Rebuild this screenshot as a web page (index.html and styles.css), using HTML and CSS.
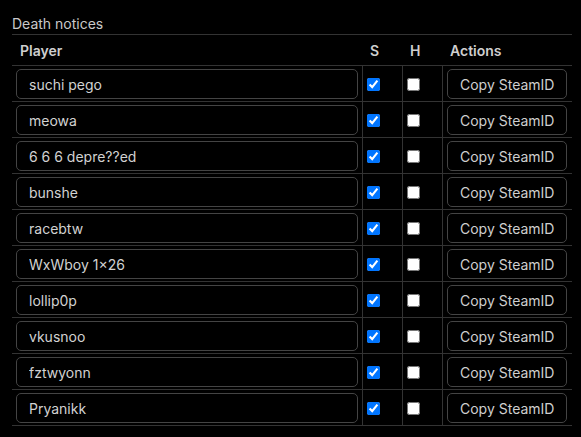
FILE: index.html
```html
<!DOCTYPE html>
<html lang="en">
<head>
<meta charset="utf-8">
<title>Death notices</title>
<link rel="stylesheet" href="styles.css">
</head>
<body>
<section class="panel">
  <div class="title">Death notices</div>
  <div class="table">
    <div class="row head">
      <div class="cell">Player</div>
      <div class="cell">S</div>
      <div class="cell">H</div>
      <div class="cell">Actions</div>
    </div>
    <div class="row">
      <div class="cell"><input class="name" type="text" value="suchi pego"></div>
      <div class="cell"><input type="checkbox" checked></div>
      <div class="cell"><input type="checkbox"></div>
      <div class="cell"><button class="btn">Copy SteamID</button></div>
    </div>
    <div class="row">
      <div class="cell"><input class="name" type="text" value="meowa"></div>
      <div class="cell"><input type="checkbox" checked></div>
      <div class="cell"><input type="checkbox"></div>
      <div class="cell"><button class="btn">Copy SteamID</button></div>
    </div>
    <div class="row">
      <div class="cell"><input class="name" type="text" value="6 6 6 depre??ed"></div>
      <div class="cell"><input type="checkbox" checked></div>
      <div class="cell"><input type="checkbox"></div>
      <div class="cell"><button class="btn">Copy SteamID</button></div>
    </div>
    <div class="row">
      <div class="cell"><input class="name" type="text" value="bunshe"></div>
      <div class="cell"><input type="checkbox" checked></div>
      <div class="cell"><input type="checkbox"></div>
      <div class="cell"><button class="btn">Copy SteamID</button></div>
    </div>
    <div class="row">
      <div class="cell"><input class="name" type="text" value="racebtw"></div>
      <div class="cell"><input type="checkbox" checked></div>
      <div class="cell"><input type="checkbox"></div>
      <div class="cell"><button class="btn">Copy SteamID</button></div>
    </div>
    <div class="row">
      <div class="cell"><input class="name" type="text" value="WxWboy 1×26"></div>
      <div class="cell"><input type="checkbox" checked></div>
      <div class="cell"><input type="checkbox"></div>
      <div class="cell"><button class="btn">Copy SteamID</button></div>
    </div>
    <div class="row">
      <div class="cell"><input class="name" type="text" value="lollip0p"></div>
      <div class="cell"><input type="checkbox" checked></div>
      <div class="cell"><input type="checkbox"></div>
      <div class="cell"><button class="btn">Copy SteamID</button></div>
    </div>
    <div class="row">
      <div class="cell"><input class="name" type="text" value="vkusnoo"></div>
      <div class="cell"><input type="checkbox" checked></div>
      <div class="cell"><input type="checkbox"></div>
      <div class="cell"><button class="btn">Copy SteamID</button></div>
    </div>
    <div class="row">
      <div class="cell"><input class="name" type="text" value="fztwyonn"></div>
      <div class="cell"><input type="checkbox" checked></div>
      <div class="cell"><input type="checkbox"></div>
      <div class="cell"><button class="btn">Copy SteamID</button></div>
    </div>
    <div class="row">
      <div class="cell"><input class="name" type="text" value="Pryanikk"></div>
      <div class="cell"><input type="checkbox" checked></div>
      <div class="cell"><input type="checkbox"></div>
      <div class="cell"><button class="btn">Copy SteamID</button></div>
    </div>
  </div>
</section>
</body>
</html>
```

FILE: styles.css
```css
html, body {
  margin: 0;
  background: #000;
  color: #cfcfcf;
  font-family: Inter, "Noto Sans", sans-serif;
  font-size: 14px;
}

.panel {
  width: 560px;
  padding: 14px 0 0 12px;
}

.title {
  line-height: 20px;
  color: #c9c9c9;
  border-bottom: 1px solid #333;
}

.table {
  display: flex;
  flex-direction: column;
}

.row {
  display: grid;
  grid-template-columns: 350px 40px 40px 130px;
  height: 36px;
  border-bottom: 1px solid #333;
  box-sizing: border-box;
}

.row.head {
  height: 31px;
}

.head .cell {
  padding: 0 8px;
  border-left: none;
  font-weight: 600;
  color: #cfcfcf;
}

.cell {
  display: flex;
  align-items: center;
  padding: 1px 4px 0;
  border-left: 1px solid #333;
}

.cell:first-child {
  border-left: none;
}

.name {
  box-sizing: border-box;
  width: 100%;
  height: 30px;
  margin: 0;
  padding: 0 12px;
  background: #000;
  border: 1px solid #444;
  border-radius: 5px;
  color: #d2d2d2;
  font: inherit;
  outline: none;
}

input[type="checkbox"] {
  width: 13px;
  height: 13px;
  margin: 0;
}

.btn {
  box-sizing: border-box;
  height: 30px;
  margin: 0;
  padding: 0 12px;
  background: #000;
  border: 1px solid #444;
  border-radius: 5px;
  color: #cfcfcf;
  font: inherit;
}
```
